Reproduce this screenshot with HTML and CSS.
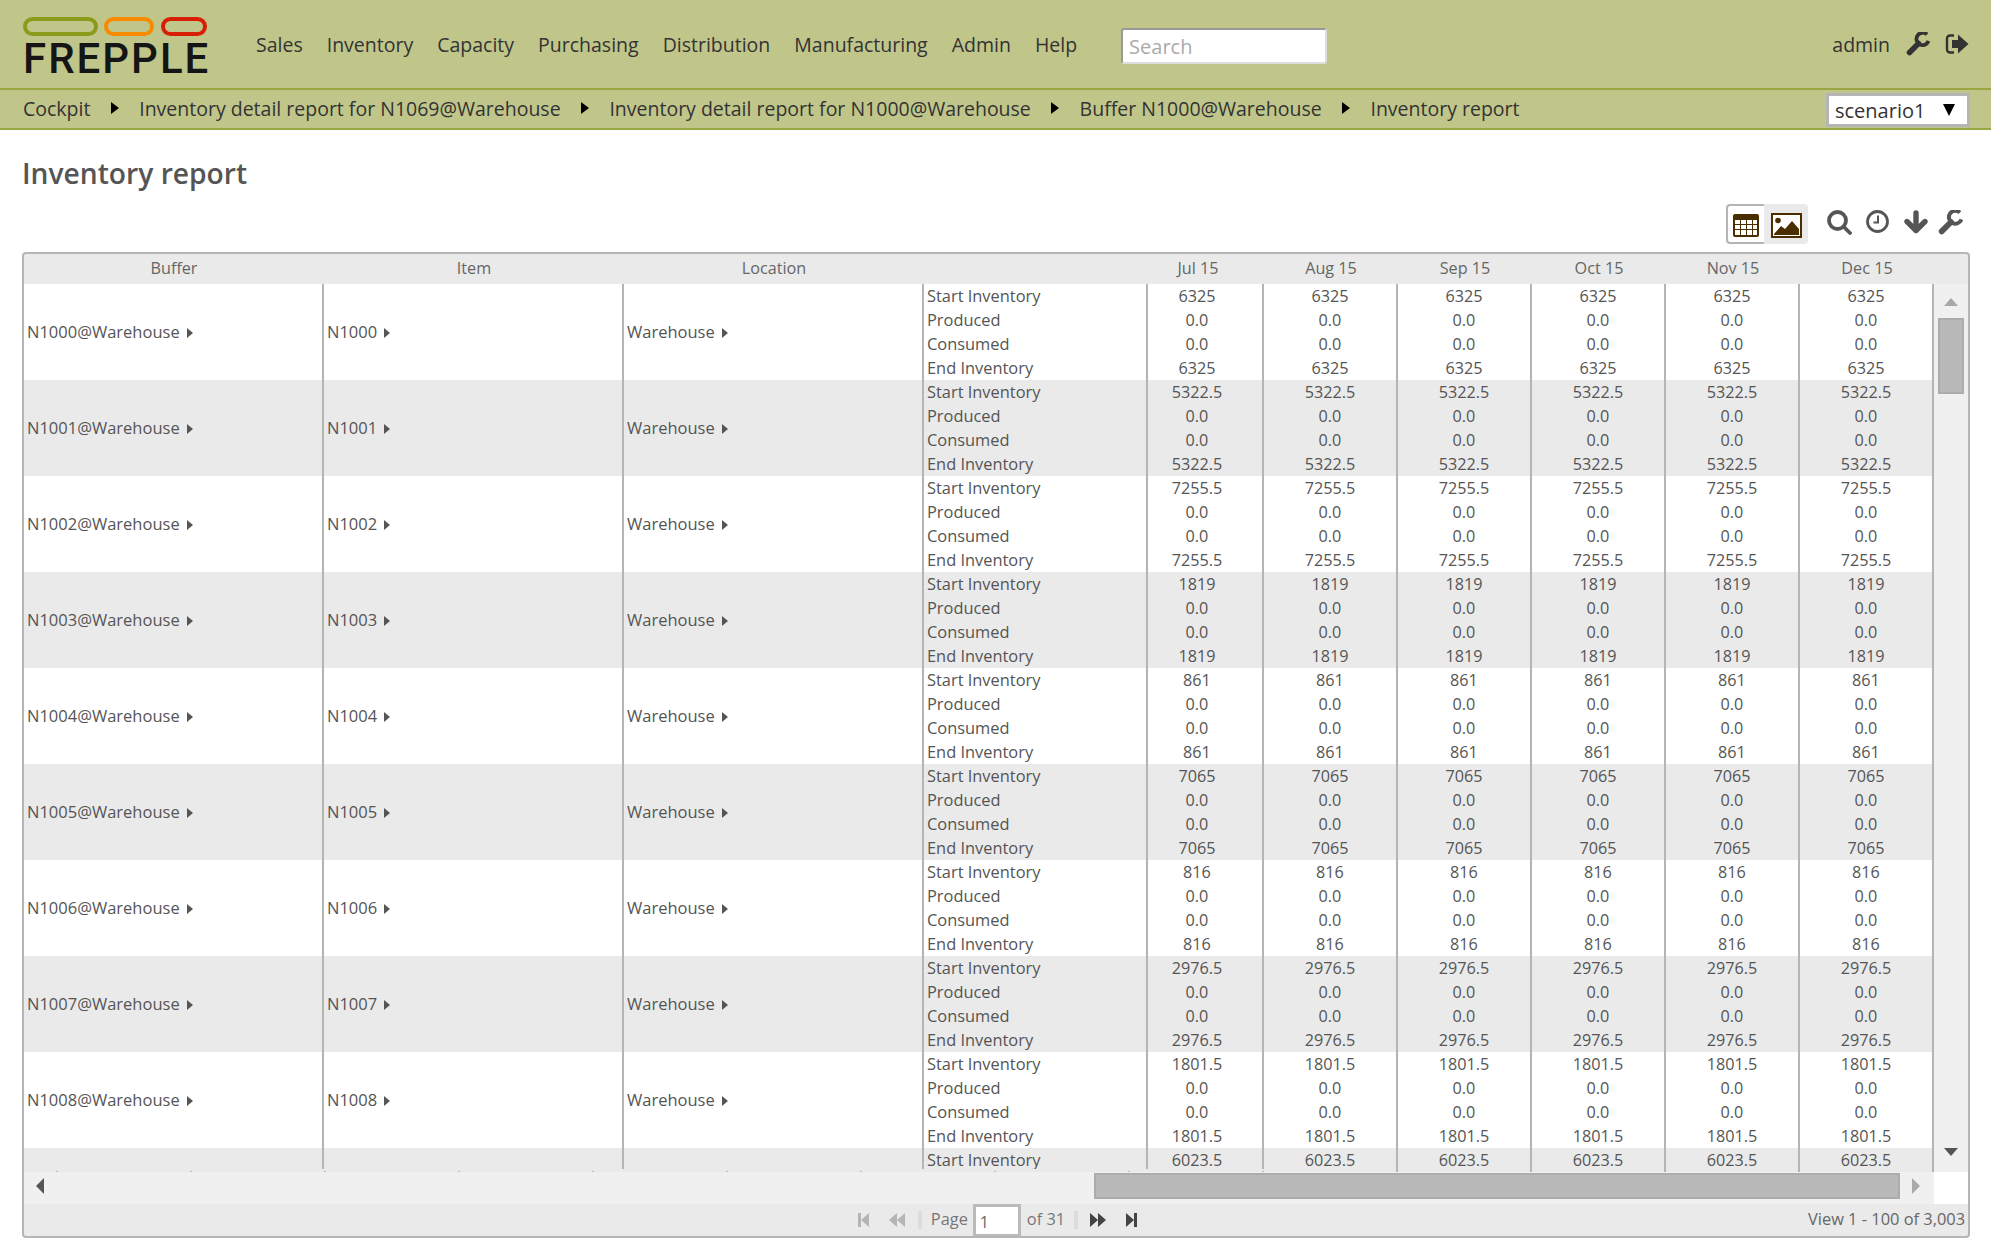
FILE: index.html
```html
<!DOCTYPE html>
<html lang="en">
<head>
    <meta charset="UTF-8">
    <title>Inventory report</title>
    <link rel="stylesheet" href="styles.css">
</head>
<body>

<header class="topbar">
    <a class="logo" href="#">
        <span class="logo-pills">
            <span class="pill pill-green"></span>
            <span class="pill pill-orange"></span>
            <span class="pill pill-red"></span>
        </span>
        <span class="logo-text">FREPPLE</span>
    </a>
    <nav class="menu">
        <a href="#">Sales</a>
        <a href="#">Inventory</a>
        <a href="#">Capacity</a>
        <a href="#">Purchasing</a>
        <a href="#">Distribution</a>
        <a href="#">Manufacturing</a>
        <a href="#">Admin</a>
        <a href="#">Help</a>
    </nav>
    <input class="search" type="text" placeholder="Search">
    <div class="user">
        <span class="user-name">admin</span>
        <svg class="icon-user" viewBox="0 0 24 24"><path d="M21 2.500A6.200 6.200 0 1 0 22.500 9" fill="none" stroke="#333" stroke-width="3.800"/><path d="M12.500 11.500L3.500 20.500" stroke="#333" stroke-width="5.500" stroke-linecap="round"/></svg>
        <svg class="icon-user" viewBox="0 0 24 24"><path d="M9 3.500H5a3 3 0 0 0-3 3v11a3 3 0 0 0 3 3h4" fill="none" stroke="#333" stroke-width="2.400"/><path d="M13 2.500L23.500 12L13 21.500V16H7V8H13Z" fill="#333"/></svg>
    </div>
</header>

<div class="crumbs">
    <a href="#">Cockpit</a><i class="crumb-arrow"></i>
    <a href="#">Inventory detail report for N1069@Warehouse</a><i class="crumb-arrow"></i>
    <a href="#">Inventory detail report for N1000@Warehouse</a><i class="crumb-arrow"></i>
    <a href="#">Buffer N1000@Warehouse</a><i class="crumb-arrow"></i>
    <a href="#">Inventory report</a>
    <div class="scenario">scenario1<i class="scenario-arrow"></i></div>
</div>

<main class="content">
    <h1>Inventory report</h1>

    <div class="toolbar">
        <div class="view-switch">
            <span class="view-btn active">
                <svg class="icon-table" viewBox="0 0 26 23"><rect x="0" y="0" width="26" height="23" rx="2" fill="#4a2e00"/><g fill="#fff"><rect x="2" y="6" width="5" height="4"/><rect x="8" y="6" width="5" height="4"/><rect x="14" y="6" width="5" height="4"/><rect x="20" y="6" width="4" height="4"/><rect x="2" y="11" width="5" height="4"/><rect x="8" y="11" width="5" height="4"/><rect x="14" y="11" width="5" height="4"/><rect x="20" y="11" width="4" height="4"/><rect x="2" y="16" width="5" height="5"/><rect x="8" y="16" width="5" height="5"/><rect x="14" y="16" width="5" height="5"/><rect x="20" y="16" width="4" height="5"/></g></svg>
            </span>
            <span class="view-btn">
                <svg class="icon-picture" viewBox="0 0 31 25"><rect x="1" y="1" width="29" height="23" fill="#fff" stroke="#4a2e00" stroke-width="2"/><circle cx="7" cy="7.500" r="2.800" fill="#4a2e00"/><path d="M3 21L10 13L14 16L21 8L28 16V22H3Z" fill="#4a2e00"/></svg>
            </span>
        </div>
        <div class="tools">
            <svg class="tool-search" viewBox="0 0 25 25"><circle cx="10.500" cy="10.500" r="8.500" fill="none" stroke="#555" stroke-width="3.800"/><path d="M16.500 16.500L23 23" stroke="#555" stroke-width="3.800" stroke-linecap="round"/></svg>
            <svg class="tool-clock" viewBox="0 0 23 23"><circle cx="11.500" cy="11.500" r="10" fill="none" stroke="#555" stroke-width="2.800"/><path d="M12 5.500V12.500H7.500" fill="none" stroke="#555" stroke-width="2"/></svg>
            <svg class="tool-down" viewBox="0 0 24 24"><path d="M12 3V20M3 11.500L12 20.500L21 11.500" fill="none" stroke="#555" stroke-width="5.400" stroke-linecap="round" stroke-linejoin="round"/></svg>
            <svg class="tool-wrench" viewBox="0 0 24 24"><path d="M21 2.500A6.200 6.200 0 1 0 22.500 9" fill="none" stroke="#555" stroke-width="3.800"/><path d="M12.500 11.500L3.500 20.500" stroke="#555" stroke-width="5.500" stroke-linecap="round"/></svg>
        </div>
    </div>

    <div class="grid">
        <table class="grid-head">
            <colgroup><col class="col-key"><col class="col-key"><col class="col-key"><col class="col-metric"><col class="col-first"><col class="col-num"><col class="col-num"><col class="col-num"><col class="col-num"><col class="col-num"><col class="col-bar"></colgroup>
            <tr><th>Buffer</th><th>Item</th><th>Location</th><th></th><th class="first">Jul 15</th><th>Aug 15</th><th>Sep 15</th><th>Oct 15</th><th>Nov 15</th><th>Dec 15</th><th></th></tr>
        </table>

        <div class="grid-middle">
            <div class="grid-body">
                <table class="grid-table">
                    <colgroup><col class="col-key"><col class="col-key"><col class="col-key"><col class="col-metric"><col class="col-first"><col class="col-num"><col class="col-num"><col class="col-num"><col class="col-num"><col class="col-num"></colgroup>
                    <tbody>
                        <tr><td rowspan="4" class="key">N1000@Warehouse <i class="link"></i></td><td rowspan="4" class="key">N1000 <i class="link"></i></td><td rowspan="4" class="key">Warehouse <i class="link"></i></td><td class="metric">Start Inventory</td><td>6325</td><td>6325</td><td>6325</td><td>6325</td><td>6325</td><td>6325</td></tr>
                        <tr><td class="metric">Produced</td><td>0.0</td><td>0.0</td><td>0.0</td><td>0.0</td><td>0.0</td><td>0.0</td></tr>
                        <tr><td class="metric">Consumed</td><td>0.0</td><td>0.0</td><td>0.0</td><td>0.0</td><td>0.0</td><td>0.0</td></tr>
                        <tr><td class="metric">End Inventory</td><td>6325</td><td>6325</td><td>6325</td><td>6325</td><td>6325</td><td>6325</td></tr>
                    </tbody>
                    <tbody>
                        <tr><td rowspan="4" class="key">N1001@Warehouse <i class="link"></i></td><td rowspan="4" class="key">N1001 <i class="link"></i></td><td rowspan="4" class="key">Warehouse <i class="link"></i></td><td class="metric">Start Inventory</td><td>5322.5</td><td>5322.5</td><td>5322.5</td><td>5322.5</td><td>5322.5</td><td>5322.5</td></tr>
                        <tr><td class="metric">Produced</td><td>0.0</td><td>0.0</td><td>0.0</td><td>0.0</td><td>0.0</td><td>0.0</td></tr>
                        <tr><td class="metric">Consumed</td><td>0.0</td><td>0.0</td><td>0.0</td><td>0.0</td><td>0.0</td><td>0.0</td></tr>
                        <tr><td class="metric">End Inventory</td><td>5322.5</td><td>5322.5</td><td>5322.5</td><td>5322.5</td><td>5322.5</td><td>5322.5</td></tr>
                    </tbody>
                    <tbody>
                        <tr><td rowspan="4" class="key">N1002@Warehouse <i class="link"></i></td><td rowspan="4" class="key">N1002 <i class="link"></i></td><td rowspan="4" class="key">Warehouse <i class="link"></i></td><td class="metric">Start Inventory</td><td>7255.5</td><td>7255.5</td><td>7255.5</td><td>7255.5</td><td>7255.5</td><td>7255.5</td></tr>
                        <tr><td class="metric">Produced</td><td>0.0</td><td>0.0</td><td>0.0</td><td>0.0</td><td>0.0</td><td>0.0</td></tr>
                        <tr><td class="metric">Consumed</td><td>0.0</td><td>0.0</td><td>0.0</td><td>0.0</td><td>0.0</td><td>0.0</td></tr>
                        <tr><td class="metric">End Inventory</td><td>7255.5</td><td>7255.5</td><td>7255.5</td><td>7255.5</td><td>7255.5</td><td>7255.5</td></tr>
                    </tbody>
                    <tbody>
                        <tr><td rowspan="4" class="key">N1003@Warehouse <i class="link"></i></td><td rowspan="4" class="key">N1003 <i class="link"></i></td><td rowspan="4" class="key">Warehouse <i class="link"></i></td><td class="metric">Start Inventory</td><td>1819</td><td>1819</td><td>1819</td><td>1819</td><td>1819</td><td>1819</td></tr>
                        <tr><td class="metric">Produced</td><td>0.0</td><td>0.0</td><td>0.0</td><td>0.0</td><td>0.0</td><td>0.0</td></tr>
                        <tr><td class="metric">Consumed</td><td>0.0</td><td>0.0</td><td>0.0</td><td>0.0</td><td>0.0</td><td>0.0</td></tr>
                        <tr><td class="metric">End Inventory</td><td>1819</td><td>1819</td><td>1819</td><td>1819</td><td>1819</td><td>1819</td></tr>
                    </tbody>
                    <tbody>
                        <tr><td rowspan="4" class="key">N1004@Warehouse <i class="link"></i></td><td rowspan="4" class="key">N1004 <i class="link"></i></td><td rowspan="4" class="key">Warehouse <i class="link"></i></td><td class="metric">Start Inventory</td><td>861</td><td>861</td><td>861</td><td>861</td><td>861</td><td>861</td></tr>
                        <tr><td class="metric">Produced</td><td>0.0</td><td>0.0</td><td>0.0</td><td>0.0</td><td>0.0</td><td>0.0</td></tr>
                        <tr><td class="metric">Consumed</td><td>0.0</td><td>0.0</td><td>0.0</td><td>0.0</td><td>0.0</td><td>0.0</td></tr>
                        <tr><td class="metric">End Inventory</td><td>861</td><td>861</td><td>861</td><td>861</td><td>861</td><td>861</td></tr>
                    </tbody>
                    <tbody>
                        <tr><td rowspan="4" class="key">N1005@Warehouse <i class="link"></i></td><td rowspan="4" class="key">N1005 <i class="link"></i></td><td rowspan="4" class="key">Warehouse <i class="link"></i></td><td class="metric">Start Inventory</td><td>7065</td><td>7065</td><td>7065</td><td>7065</td><td>7065</td><td>7065</td></tr>
                        <tr><td class="metric">Produced</td><td>0.0</td><td>0.0</td><td>0.0</td><td>0.0</td><td>0.0</td><td>0.0</td></tr>
                        <tr><td class="metric">Consumed</td><td>0.0</td><td>0.0</td><td>0.0</td><td>0.0</td><td>0.0</td><td>0.0</td></tr>
                        <tr><td class="metric">End Inventory</td><td>7065</td><td>7065</td><td>7065</td><td>7065</td><td>7065</td><td>7065</td></tr>
                    </tbody>
                    <tbody>
                        <tr><td rowspan="4" class="key">N1006@Warehouse <i class="link"></i></td><td rowspan="4" class="key">N1006 <i class="link"></i></td><td rowspan="4" class="key">Warehouse <i class="link"></i></td><td class="metric">Start Inventory</td><td>816</td><td>816</td><td>816</td><td>816</td><td>816</td><td>816</td></tr>
                        <tr><td class="metric">Produced</td><td>0.0</td><td>0.0</td><td>0.0</td><td>0.0</td><td>0.0</td><td>0.0</td></tr>
                        <tr><td class="metric">Consumed</td><td>0.0</td><td>0.0</td><td>0.0</td><td>0.0</td><td>0.0</td><td>0.0</td></tr>
                        <tr><td class="metric">End Inventory</td><td>816</td><td>816</td><td>816</td><td>816</td><td>816</td><td>816</td></tr>
                    </tbody>
                    <tbody>
                        <tr><td rowspan="4" class="key">N1007@Warehouse <i class="link"></i></td><td rowspan="4" class="key">N1007 <i class="link"></i></td><td rowspan="4" class="key">Warehouse <i class="link"></i></td><td class="metric">Start Inventory</td><td>2976.5</td><td>2976.5</td><td>2976.5</td><td>2976.5</td><td>2976.5</td><td>2976.5</td></tr>
                        <tr><td class="metric">Produced</td><td>0.0</td><td>0.0</td><td>0.0</td><td>0.0</td><td>0.0</td><td>0.0</td></tr>
                        <tr><td class="metric">Consumed</td><td>0.0</td><td>0.0</td><td>0.0</td><td>0.0</td><td>0.0</td><td>0.0</td></tr>
                        <tr><td class="metric">End Inventory</td><td>2976.5</td><td>2976.5</td><td>2976.5</td><td>2976.5</td><td>2976.5</td><td>2976.5</td></tr>
                    </tbody>
                    <tbody>
                        <tr><td rowspan="4" class="key">N1008@Warehouse <i class="link"></i></td><td rowspan="4" class="key">N1008 <i class="link"></i></td><td rowspan="4" class="key">Warehouse <i class="link"></i></td><td class="metric">Start Inventory</td><td>1801.5</td><td>1801.5</td><td>1801.5</td><td>1801.5</td><td>1801.5</td><td>1801.5</td></tr>
                        <tr><td class="metric">Produced</td><td>0.0</td><td>0.0</td><td>0.0</td><td>0.0</td><td>0.0</td><td>0.0</td></tr>
                        <tr><td class="metric">Consumed</td><td>0.0</td><td>0.0</td><td>0.0</td><td>0.0</td><td>0.0</td><td>0.0</td></tr>
                        <tr><td class="metric">End Inventory</td><td>1801.5</td><td>1801.5</td><td>1801.5</td><td>1801.5</td><td>1801.5</td><td>1801.5</td></tr>
                    </tbody>
                    <tbody>
                        <tr><td class="key"></td><td class="key"></td><td class="key"></td><td class="metric">Start Inventory</td><td>6023.5</td><td>6023.5</td><td>6023.5</td><td>6023.5</td><td>6023.5</td><td>6023.5</td></tr>
                    </tbody>
                </table>
                <div class="cut-ticks"></div>
            </div>
            <div class="vbar">
                <i class="arrow-up"></i>
                <div class="vbar-thumb"></div>
                <i class="arrow-down"></i>
            </div>
        </div>

        <div class="hbar-row">
            <div class="hbar">
                <i class="arrow-left"></i>
                <div class="hbar-thumb"></div>
                <i class="arrow-right"></i>
            </div>
            <div class="hbar-corner"></div>
        </div>

        <div class="pager">
            <div class="pager-side"></div>
            <div class="pager-center">
                <svg class="pg pg-first" viewBox="0 0 11 14"><path d="M0 0H3V14H0ZM11 0V14L3 7Z" fill="#b5b5b5"/></svg>
                <svg class="pg pg-prev" viewBox="0 0 16 14"><path d="M8 0V14L0 7ZM16 0V14L8 7Z" fill="#b5b5b5"/></svg>
                <i class="pg-sep"></i>
                <span class="pg-label">Page</span>
                <input class="pg-input" type="text" value="1">
                <span class="pg-label">of 31</span>
                <i class="pg-sep pg-sep-right"></i>
                <svg class="pg pg-next" viewBox="0 0 16 14"><path d="M0 0V14L8 7ZM8 0V14L16 7Z" fill="#444"/></svg>
                <svg class="pg pg-last" viewBox="0 0 11 14"><path d="M0 0V14L8 7ZM8 0H11V14H8Z" fill="#444"/></svg>
            </div>
            <div class="pager-side pager-count">View 1 - 100 of 3,003</div>
        </div>
    </div>
</main>

</body>
</html>
```

FILE: styles.css
```css
body {
    margin: 0;
    font-family: "Open Sans", sans-serif;
    color: #555;
    background: #fff;
}

a {
    color: inherit;
    text-decoration: none;
}

/* top menu */
.topbar {
    display: flex;
    align-items: center;
    height: 88px;
    padding: 0 22px 0 23px;
    background: #c0c68a;
    border-bottom: 2px solid #9aa63f;
    color: #333;
    font-size: 19.5px;
}

.logo {
    display: flex;
    flex-direction: column;
    align-self: flex-start;
    width: 185px;
    margin-top: 17px;
}

.logo-pills {
    display: flex;
    height: 19px;
}

.pill {
    box-sizing: border-box;
    height: 19px;
    border-radius: 10px;
    border-width: 4px;
    border-style: solid;
}

.pill-green {
    width: 75px;
    margin-right: 6px;
    border-color: #8a9a1a;
}

.pill-orange {
    width: 50px;
    margin-right: 7px;
    border-color: #f88a00;
}

.pill-red {
    width: 46px;
    border-color: #d81e05;
}

.logo-text {
    margin-top: 2px;
    font-family: "Roboto", sans-serif;
    font-size: 42px;
    font-weight: 500;
    line-height: 42px;
    letter-spacing: 2px;
    color: #151515;
}

.menu {
    display: flex;
    gap: 24px;
    margin-left: 48px;
}

.search {
    box-sizing: border-box;
    width: 206px;
    height: 36px;
    margin-left: 44px;
    margin-top: 4px;
    padding: 0 6px;
    border: 2px solid #ddd;
    border-top-color: #999;
    border-left-color: #999;
    border-radius: 3px;
    font-family: inherit;
    font-size: 20px;
    background: #fff;
}

.search::placeholder {
    color: #aaa;
}

.user {
    display: flex;
    align-items: center;
    margin-left: auto;
}

.user-name {
    margin-right: 16px;
}

.icon-user {
    width: 24px;
    height: 24px;
}

.icon-user + .icon-user {
    margin-left: 15px;
}

/* breadcrumbs */
.crumbs {
    display: flex;
    align-items: center;
    gap: 20.4px;
    box-sizing: border-box;
    height: 40px;
    padding: 0 21px 2px 23px;
    background: #c0c68a;
    border-bottom: 2px solid #9aa63f;
    color: #333;
    font-size: 19.5px;
}

.crumb-arrow {
    width: 0;
    height: 0;
    border-left: 8px solid #000;
    border-top: 6px solid transparent;
    border-bottom: 6px solid transparent;
}

.scenario {
    display: flex;
    align-items: center;
    box-sizing: border-box;
    width: 144px;
    height: 34px;
    margin-left: auto;
    margin-top: 4px;
    padding: 0 12px 0 6px;
    border: 3px solid #b5b5b5;
    background: #fff;
    font-size: 20px;
}

.scenario-arrow {
    margin-left: auto;
    width: 0;
    height: 0;
    border-top: 12px solid #000;
    border-left: 6px solid transparent;
    border-right: 6px solid transparent;
}

/* page */
.content {
    padding: 0 21px 0 22px;
}

h1 {
    margin: 0;
    padding-top: 25px;
    height: 36px;
    font-size: 28.2px;
    font-weight: 600;
    line-height: 36px;
    color: #555;
}

.toolbar {
    display: flex;
    justify-content: flex-end;
    align-items: center;
    height: 40px;
    margin-top: 13px;
    margin-bottom: 8px;
    padding-right: 7px;
}

.view-switch {
    display: flex;
    height: 40px;
}

.view-btn {
    display: flex;
    align-items: center;
    justify-content: center;
    box-sizing: border-box;
    width: 44px;
    height: 40px;
    padding-top: 2px;
    background: #eaeaea;
    border-radius: 0 4px 4px 0;
}

.view-btn.active {
    width: 38px;
    background: #fff;
    border: 2px solid #b5b5b5;
    border-right: 0;
    border-radius: 4px 0 0 4px;
}

.icon-table {
    width: 26px;
    height: 23px;
}

.icon-picture {
    width: 31px;
    height: 25px;
}

.tools {
    display: flex;
    align-items: flex-start;
    margin-left: 19px;
    margin-top: -4px;
}

.tool-search {
    width: 25px;
    height: 25px;
}

.tool-clock {
    width: 23px;
    height: 23px;
    margin-left: 14px;
}

.tool-down {
    width: 24px;
    height: 24px;
    margin-left: 15px;
}

.tool-wrench {
    width: 25px;
    height: 25px;
    margin-left: 10px;
}

/* grid */
.grid {
    width: 1944px;
    border: 2px solid #b5b5b5;
    border-radius: 4px;
    background: #eaeaea;
}

table {
    table-layout: fixed;
    border-collapse: separate;
    border-spacing: 0;
    font-size: 16.2px;
    line-height: 24px;
}

.col-key {
    width: 300px;
}

.col-metric {
    width: 224px;
}

.col-first {
    width: 116px;
}

.col-num {
    width: 134px;
}

.col-bar {
    width: 34px;
}

.grid-head {
    width: 1944px;
    height: 30px;
    color: #666;
}

.grid-head th {
    padding: 0 0 2px;
    font-weight: 400;
    text-align: center;
}

.grid-head th.first,
.grid-table td:nth-last-child(6) {
    padding-right: 16px;
}

.grid-middle {
    display: flex;
}

.grid-body {
    position: relative;
    width: 1910px;
    height: 888px;
    overflow: hidden;
    background: #fff;
}

.grid-table {
    width: 1910px;
}

.grid-table td {
    box-sizing: border-box;
    height: 24px;
    padding: 0;
    border-right: 2px solid #b5b5b5;
    text-align: center;
    white-space: nowrap;
}

.grid-table tbody:nth-of-type(even) td {
    background: #eaeaea;
}

.grid-table td.key {
    padding-left: 3px;
    font-size: 16.5px;
    text-align: left;
    color: #555;
}

.grid-table td.metric {
    padding-left: 3px;
    font-size: 16.4px;
    text-align: left;
}

.link {
    display: inline-block;
    width: 0;
    height: 0;
    margin-left: 3px;
    border-left: 6px solid #555;
    border-top: 5px solid transparent;
    border-bottom: 5px solid transparent;
}

.cut-ticks {
    position: absolute;
    left: 0;
    bottom: 0;
    width: 1240px;
    height: 3px;
    background:
        repeating-linear-gradient(90deg, transparent 0 32px, #b5b5b5 32px 34px, transparent 34px 134px) 0 2px no-repeat,
        #eaeaea;
}

.vbar {
    display: flex;
    flex-direction: column;
    align-items: center;
    width: 34px;
    height: 888px;
    box-sizing: border-box;
    padding: 14px 0 16px;
    background: #f0f0f0;
}

.arrow-up {
    width: 0;
    height: 0;
    border-bottom: 8px solid #a8a8a8;
    border-left: 7px solid transparent;
    border-right: 7px solid transparent;
}

.arrow-down {
    margin-top: auto;
    width: 0;
    height: 0;
    border-top: 8px solid #555;
    border-left: 7px solid transparent;
    border-right: 7px solid transparent;
}

.vbar-thumb {
    box-sizing: border-box;
    width: 26px;
    height: 76px;
    margin-top: 12px;
    background: #b9b9b9;
    border: 2px solid #acacac;
}

.hbar-row {
    display: flex;
    height: 32px;
}

.hbar {
    display: flex;
    align-items: center;
    box-sizing: border-box;
    width: 1910px;
    padding: 0 14px 4px 12px;
    background: #f0f0f0;
}

.hbar-corner {
    width: 34px;
    background: #fff;
}

.arrow-left {
    width: 0;
    height: 0;
    border-right: 8px solid #555;
    border-top: 8px solid transparent;
    border-bottom: 8px solid transparent;
}

.arrow-right {
    width: 0;
    height: 0;
    border-left: 8px solid #aaa;
    border-top: 8px solid transparent;
    border-bottom: 8px solid transparent;
}

.hbar-thumb {
    box-sizing: border-box;
    width: 806px;
    height: 26px;
    margin-left: auto;
    margin-right: 12px;
    background: #b9b9b9;
    border: 2px solid #acacac;
}

/* pager */
.pager {
    display: grid;
    grid-template-columns: 1fr auto 1fr;
    align-items: center;
    height: 32px;
    font-size: 16.4px;
    color: #777;
}

.pager-center {
    display: flex;
    align-items: center;
    height: 32px;
    padding-left: 3px;
}

.pg-label {
    margin-top: -4px;
}

.pager-count {
    padding: 0 3px 3px 0;
    text-align: right;
    color: #666;
}

.pg {
    height: 14px;
    margin-top: -1px;
}

.pg-first {
    width: 11px;
}

.pg-prev {
    width: 16px;
    margin-left: 20px;
}

.pg-sep {
    width: 4px;
    height: 18px;
    margin: 0 9px 0 13px;
    background: #dcdcdc;
}

.pg-sep-right {
    margin: 0 12px 0 9px;
}

.pg-input {
    box-sizing: border-box;
    width: 48px;
    height: 32px;
    margin: 0 6px 0 5px;
    padding: 3px 4px 0;
    border: 3px solid #bbb;
    border-bottom-width: 2px;
    background: #fff;
    font-family: inherit;
    font-size: 16px;
    color: #666;
}

.pg-last {
    width: 11px;
    margin-left: 20px;
}
```
